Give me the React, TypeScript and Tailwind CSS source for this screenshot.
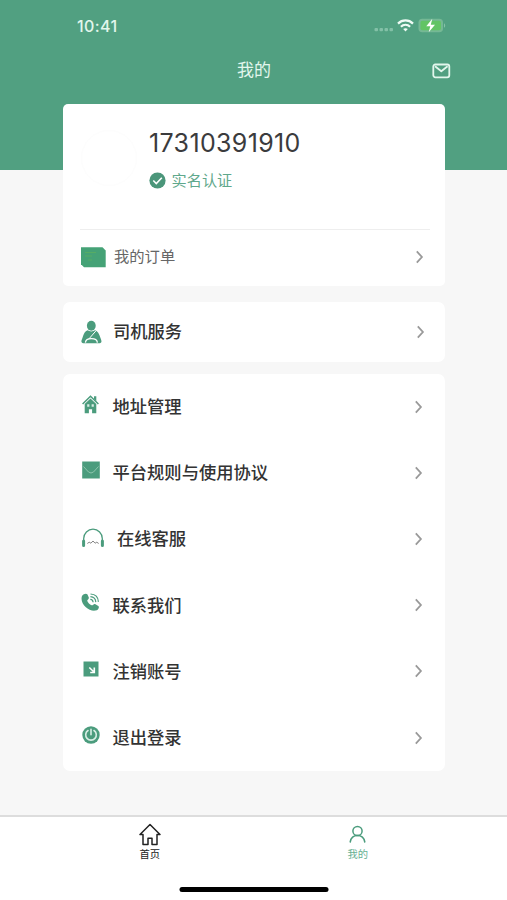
import type { ReactNode } from "react";

const GREEN = "#4b9c7d";

function Chevron() {
  return (
    <svg width="9" height="14" viewBox="0 0 9 14" fill="none" stroke="#999" strokeWidth="1.8">
      <path d="M1.800 1.400 6.900 7l-5.100 5.600" />
    </svg>
  );
}

function OrderIcon() {
  return (
    <svg width="26" height="21" viewBox="0 0 26 21">
      <path d="M1 .3h21.500l3.200 3.200V20.300H4L1 17.300z" fill="#45a276" />
      <path d="M5 5.500h11M5 9h7M8 13h4" stroke="#57ac64" strokeWidth="1" />
    </svg>
  );
}

function DriverIcon() {
  return (
    <svg width="21" height="24" viewBox="0 0 21 24">
      <ellipse cx="10.300" cy="5.700" rx="4.400" ry="5" fill={GREEN} />
      <path d="M6.500 10.300c2.300 1.500 5.300 1.500 7.600 0 2.600.8 4 3.600 5.300 7.400.9 2.200 1.300 3.400 1 4.400-.3.900-1.300 1.200-2.600 1.200H3.200c-1.500 0-2.400-.4-2.700-1.300-.3-1.100.2-2.200 1-4.300 1.200-3.800 2.500-6.600 5-7.400z" fill={GREEN} />
      <path d="M14.800 11 8 18.800" fill="none" stroke="#fff" strokeWidth="1" />
      <path d="M4.400 22.600c.6-5.200 11.400-5.200 12 0" fill="none" stroke="#fff" strokeWidth="1.300" />
    </svg>
  );
}

function AddressIcon() {
  return (
    <svg width="17" height="19" viewBox="0 0 17 19">
      <path d="M.6 9 8.500 1.300 16.400 9" fill="none" stroke={GREEN} strokeWidth="1.500" />
      <path d="M12 1.200h2.300v5.100L12 4zM2.700 9 8.500 3.600 14.300 9v9.200h-4.200v-3.900H6.900v3.900H2.700z" fill={GREEN} />
      <path d="M5.200 9.200h2.200v2.500H5.200zM9.600 9.200h2.200v2.500H9.600z" fill="#d8ebe3" />
    </svg>
  );
}

function AgreementIcon() {
  return (
    <svg width="18" height="18" viewBox="0 0 18 18">
      <path d="M.2.500h17.600v17H.2z" fill={GREEN} />
      <path d="m1.500 5.500 5 5.500q2.500 2 5 0l5-5.500" fill="none" stroke="#8dc5ac" strokeWidth="1" />
    </svg>
  );
}

function SupportIcon() {
  return (
    <svg width="23" height="20" viewBox="0 0 23 20" fill="none" className="translate-x-[2.500px] translate-y-[2px]">
      <path d="M2.200 12.500V10.500a9.300 9.300 0 0 1 18.600 0v2" stroke={GREEN} strokeWidth="1.300" />
      <path d="M2.100 13v4.500M20.900 13v4.500" stroke={GREEN} strokeWidth="3" strokeLinecap="round" />
      <path d="m5.800 15.500 1.900-1.300 1.700 1 2.100-2.200 2.100 2.200 1.700-1 1.900 1.300" stroke="#777" strokeWidth=".9" />
    </svg>
  );
}

function CallIcon() {
  return (
    <svg width="19" height="19" viewBox="0 0 19 19" fill="none">
      <path d="M1 3C2.600.5 5.600 0 6.500 1.600l1.300 3c.5 1.400-1.900 2.200-1.500 3.400.7 1.900 2.300 3.500 4.300 4.300 1.200.5 2.100-1.700 3.400-1.200l3.300 1.800c1.500 1.200-.1 4.300-2.800 4.700C7.400 18.700-1.600 10.300 1 3z" fill={GREEN} />
      <path d="M9.300 6.400c1.700.1 2.700 1.100 2.800 2.800M9.400 3.700c3.200.2 5.200 2.200 5.400 5.400M9.500 1c4.700.2 7.700 3.200 7.900 7.900" stroke={GREEN} strokeWidth="1.200" />
    </svg>
  );
}

function CloseAccountIcon() {
  return (
    <svg width="16" height="16" viewBox="0 0 16 16" fill="none">
      <path d="M.5.500h15v15H.5z" fill={GREEN} />
      <path d="m6.300 6.500 4.200 4M11.300 6.500v5H7.200" stroke="#fff" strokeWidth="1.600" />
    </svg>
  );
}

function LogoutIcon() {
  return (
    <svg width="18" height="18" viewBox="0 0 18 18" fill="none">
      <circle cx="9" cy="9" r="8.700" fill={GREEN} />
      <path d="M6 4.500a5.300 5.300 0 1 0 6 0M9 3.200v5.600" stroke="#d9eee5" strokeWidth="1.600" strokeLinecap="round" />
    </svg>
  );
}

type RowProps = { icon: ReactNode; label: string; labelClass?: string };

function MenuRow({ icon, label, labelClass = "ml-[10.500px]" }: RowProps) {
  return (
    <li className="flex h-[66.200px] items-center pr-[22px] pl-[16px]">
      <span className="-mt-[5px] flex w-[23px] shrink-0 justify-center">{icon}</span>
      <span className={`flex-1 text-[17.300px] leading-none font-medium text-[#333] ${labelClass}`}>{label}</span>
      <Chevron />
    </li>
  );
}

export default function App() {
  return (
    <div className="flex h-[900px] w-[507px] flex-col overflow-hidden bg-[#f7f7f7] font-['Inter','Noto_Sans_CJK_SC',sans-serif]">
      <header className="h-[170px] shrink-0 bg-[#51a081] text-[#e2f6ec]">
        <div className="flex h-[52px] items-center justify-between pr-[60px] pl-[77px]">
          <span className="text-[16px] font-medium tracking-[0.400px]">10:41</span>
          <div className="flex items-center">
            <svg width="20" height="4" viewBox="0 0 20 4" className="mt-[7px] mr-[3px]" fill="#83c0a7">
              <rect x=".5" width="3.500" height="3.300" rx="1" />
              <rect x="5.500" width="3.500" height="3.300" rx="1" />
              <rect x="10.500" width="3.500" height="3.300" rx="1" />
              <rect x="15.500" width="3.500" height="3.300" rx="1" />
            </svg>
            <svg width="17" height="13" viewBox="0 0 17 13" className="-mt-[2px]" fill="none" stroke="#effbf5" strokeWidth="2.200">
              <path d="M1 4.600c4.200-4.200 10.800-4.200 15 0M3.900 7.700c2.600-2.600 6.600-2.600 9.200 0" />
              <path d="m8.500 12.500 2.300-2.400c-1.300-1.200-3.300-1.200-4.600 0z" fill="#effbf5" stroke="none" />
            </svg>
            <svg width="29" height="15" viewBox="0 0 29 15" className="-mt-[1px] ml-[4px]">
              <rect x=".5" y=".8" width="24.500" height="13.400" rx="3.800" fill="#75b895" />
              <rect x="2.500" y="2.800" width="20.500" height="9.400" rx="2" fill="#62c465" />
              <path d="M26 5.200c1.600.7 1.600 3.900 0 4.600z" fill="#86c2a6" />
              <path d="M14.300.8 8.300 8.200h4l-1.600 6 6.300-7.500h-4.200z" fill="#fff" />
            </svg>
          </div>
        </div>
        <div className="grid h-[37px] grid-cols-[1fr_auto_1fr] items-center pr-[56px] pl-[57px]">
          <h1 className="col-start-2 text-[17px] leading-none">我的</h1>
          <svg width="19" height="16" viewBox="0 0 19 16" className="justify-self-end" fill="none" stroke="#e2f6ec" strokeWidth="1.800" strokeLinejoin="round">
            <rect x="1.300" y="1.500" width="16" height="12.800" rx="2" />
            <path d="m3 3.300 6.300 5 6.300-5" />
          </svg>
        </div>
      </header>

      <main className="z-10 -mt-[66px] ml-[63px] w-[382px] flex-1">
        <section className="h-[181.500px] rounded-[5px] bg-white">
          <div className="flex h-[124.500px] pl-[18px]">
            <div className="mt-[26px] size-[56px] rounded-full border border-[#fdfdfd]" />
            <div className="pt-[24px] pl-[12px]">
              <p className="text-[25px] leading-[30px] tracking-[0.350px] text-[#3b3b3d]">17310391910</p>
              <p className="mt-[14px] flex items-center gap-[5.500px] text-[15.200px] leading-[16px] text-[#5fa88c]">
                <svg width="17" height="17" viewBox="0 0 17 17" fill="none">
                  <circle cx="8.500" cy="8.500" r="8.100" fill="#4b967a" />
                  <path d="m4.300 8.500 3 3 5.500-5.700" stroke="#fff" strokeWidth="1.600" />
                </svg>
                实名认证
              </p>
            </div>
          </div>
          <div className="mr-[15px] ml-[17px] flex h-[56px] items-center border-t border-[#eeeeee] pr-[6px]">
            <OrderIcon />
            <span className="ml-[8px] flex-1 text-[15.300px] leading-none text-[#666]">我的订单</span>
            <Chevron />
          </div>
        </section>

        <section className="mt-[16.500px] flex h-[60px] items-center rounded-[7px] bg-white pr-[20px] pl-[18px]">
          <DriverIcon />
          <span className="ml-[11px] flex-1 text-[17.300px] leading-none font-medium text-[#333]">司机服务</span>
          <Chevron />
        </section>

        <ul className="mt-[11.500px] rounded-[7px] bg-white">
          <MenuRow icon={<AddressIcon />} label="地址管理" />
          <MenuRow icon={<AgreementIcon />} label="平台规则与使用协议" />
          <MenuRow icon={<SupportIcon />} label="在线客服" labelClass="ml-[15px]" />
          <MenuRow icon={<CallIcon />} label="联系我们" />
          <MenuRow icon={<CloseAccountIcon />} label="注销账号" />
          <MenuRow icon={<LogoutIcon />} label="退出登录" />
        </ul>
      </main>

      <footer className="flex h-[85px] shrink-0 flex-col items-center border-t-2 border-[#dddddd] bg-white">
        <nav className="grid w-full grid-cols-2 pr-[46px] pl-[46px]">
          <a className="flex flex-col items-center pt-[6px] text-[10.300px] text-[#222]">
            <svg width="22" height="23" viewBox="0 0 22 23" fill="none" stroke="#222" strokeWidth="1.500" strokeLinejoin="round">
              <path d="M11 1.500 1 11.500h3V21.500h5V15.300h4v6.200h5V11.500h3z" />
            </svg>
            <span className="mt-[2px] leading-[12px]">首页</span>
          </a>
          <a className="flex flex-col items-center pt-[6px] text-[10.300px] text-[#66b092]">
            <svg width="18" height="23" viewBox="0 0 18 23" fill="none" stroke="#4b9c7d" strokeWidth="1.500" strokeLinecap="round">
              <circle cx="9.500" cy="8" r="4.600" />
              <path d="M2.200 19c.7-3.900 3.400-6.400 7.300-6.400s6.600 2.500 7.300 6.400" />
            </svg>
            <span className="mt-[2px] translate-x-[0.500px] leading-[12px]">我的</span>
          </a>
        </nav>
        <div className="mt-[27px] h-[5px] w-[149px] translate-x-[0.500px] rounded-full bg-black" />
      </footer>
    </div>
  );
}
